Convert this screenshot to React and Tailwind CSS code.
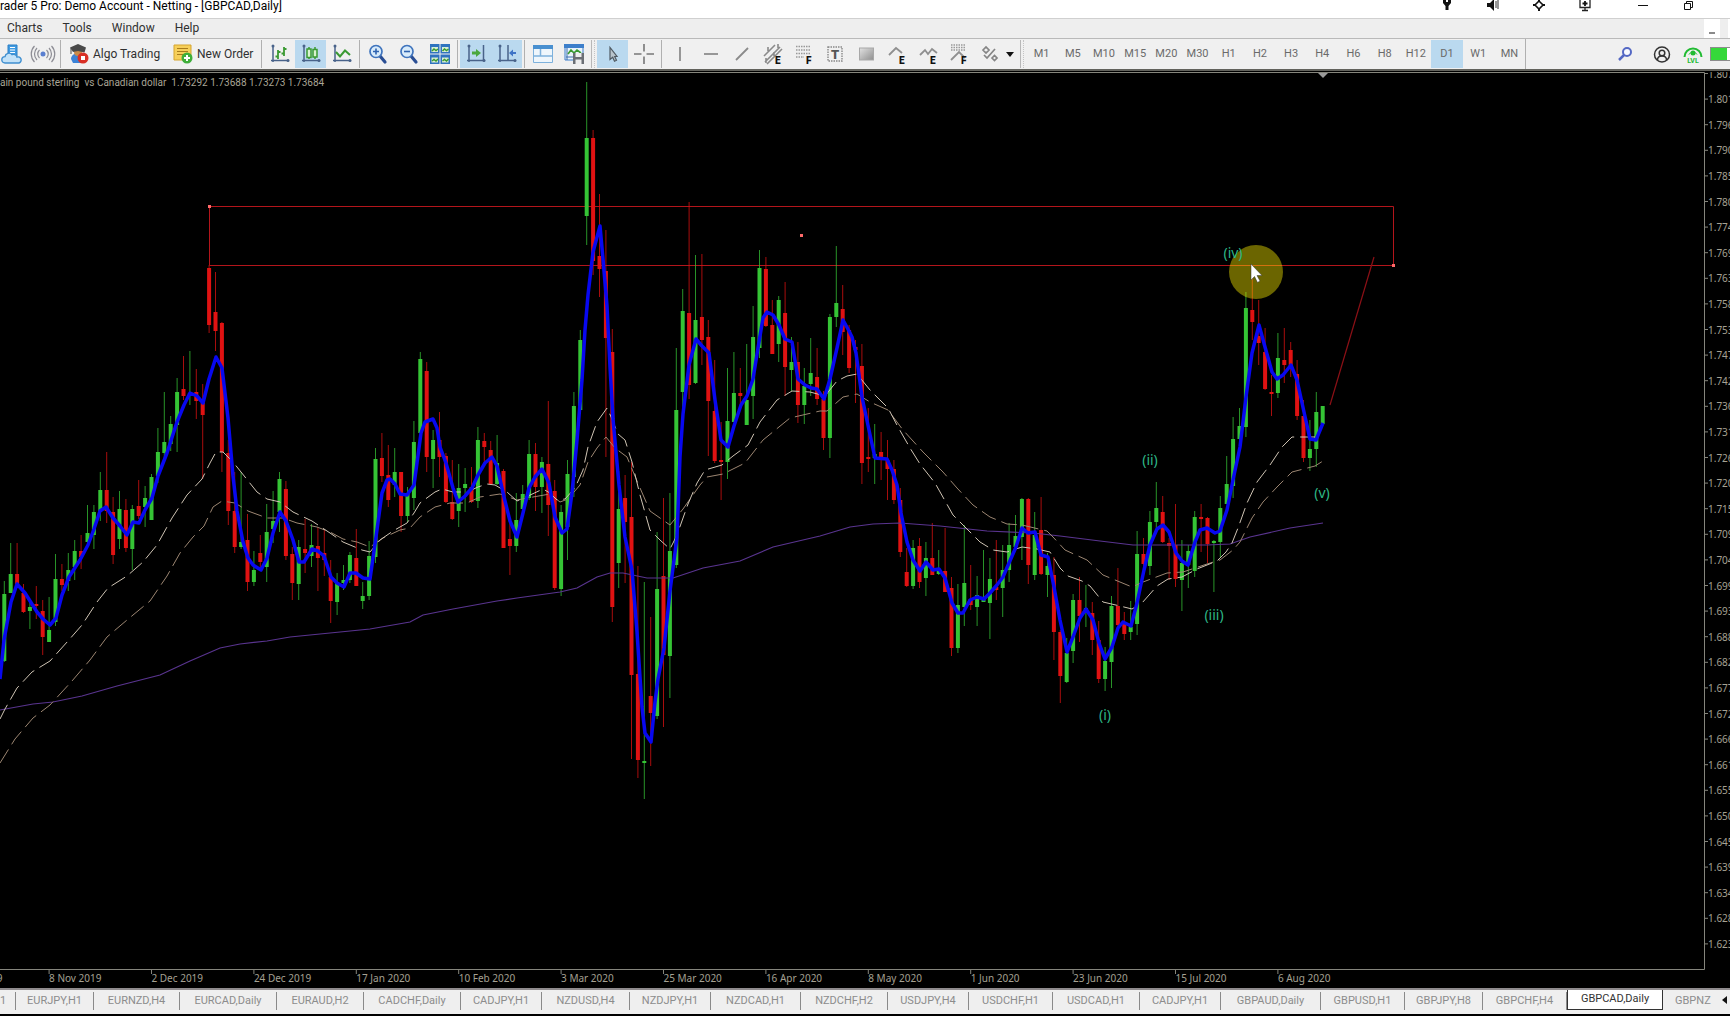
import React, { useState } from 'react';

// --- DATA ---
// Chart space: x grows 6.4 units per daily bar, y is measured from the top of the window.
// Each bar is [open, high, low, close].
const BAR_STEP = 6.4;
const FIRST_BAR = 4.3;

const bars = [
  [661, 581, 662, 594], [593, 543, 593, 574], [574, 543, 586, 584], [593, 584, 613, 612], [611, 600, 629, 607],
  [604, 586, 619, 606], [611, 600, 655, 637], [642, 597, 642, 630], [622, 554, 626, 579], [579, 564, 591, 585],
  [581, 553, 591, 570], [567, 540, 580, 551], [551, 535, 569, 557], [542, 505, 546, 533], [535, 505, 549, 512],
  [511, 472, 521, 490], [490, 452, 523, 511], [512, 497, 564, 555], [539, 491, 549, 509], [510, 499, 552, 548],
  [549, 505, 570, 509], [506, 480, 519, 516], [507, 486, 527, 498], [520, 474, 520, 477], [476, 428, 483, 452],
  [453, 392, 458, 442], [444, 416, 451, 424], [425, 378, 452, 392], [389, 356, 400, 396], [395, 351, 405, 393],
  [392, 369, 419, 401], [403, 384, 479, 415], [268, 265, 333, 325], [312, 272, 351, 331], [323, 322, 472, 452],
  [453, 440, 525, 511], [511, 472, 553, 547], [547, 472, 549, 542], [540, 514, 591, 582], [582, 551, 586, 570],
  [553, 535, 569, 562], [567, 504, 582, 532], [529, 491, 543, 521], [512, 472, 532, 479], [489, 481, 560, 556],
  [554, 547, 600, 583], [584, 540, 600, 547], [549, 519, 573, 553], [556, 524, 567, 545], [546, 527, 591, 558],
  [553, 530, 576, 560], [577, 560, 623, 601], [602, 573, 615, 583], [583, 565, 590, 580], [580, 552, 583, 555],
  [558, 529, 586, 586], [601, 582, 609, 596], [596, 541, 600, 556], [557, 448, 563, 459], [458, 433, 482, 476],
  [475, 445, 507, 500], [485, 448, 497, 472], [472, 472, 532, 516], [516, 487, 522, 493], [498, 421, 510, 442],
  [433, 352, 445, 359], [371, 362, 472, 457], [459, 430, 488, 440], [440, 412, 477, 457], [456, 453, 503, 502],
  [502, 460, 520, 519], [511, 464, 527, 488], [488, 468, 512, 484], [487, 467, 503, 502], [501, 427, 508, 440],
  [441, 433, 466, 447], [450, 441, 485, 484], [484, 435, 485, 463], [471, 469, 548, 548], [539, 520, 575, 546],
  [546, 493, 552, 520], [509, 485, 515, 494], [498, 440, 500, 454], [454, 443, 511, 487], [487, 457, 513, 462],
  [464, 401, 536, 505], [491, 480, 590, 588], [589, 505, 596, 512], [527, 460, 560, 474], [477, 392, 497, 406],
  [410, 330, 412, 340], [216, 82, 245, 138], [138, 130, 275, 261], [256, 194, 297, 269], [271, 230, 457, 338],
  [352, 329, 622, 607], [563, 471, 588, 509], [498, 475, 583, 522], [517, 462, 759, 675], [674, 566, 778, 760],
  [763, 582, 799, 761], [696, 617, 766, 713], [716, 532, 719, 589], [576, 498, 727, 655], [656, 493, 698, 551],
  [565, 348, 568, 410], [392, 289, 414, 311], [313, 202, 399, 385], [383, 255, 384, 320], [317, 254, 365, 340],
  [337, 320, 456, 401], [411, 360, 463, 461], [460, 422, 500, 462], [462, 368, 479, 421], [422, 352, 422, 393],
  [393, 368, 410, 396], [425, 344, 425, 400], [396, 306, 419, 337], [348, 250, 358, 268], [269, 257, 327, 326],
  [325, 300, 354, 354], [344, 296, 362, 300], [313, 282, 396, 367], [370, 337, 391, 362], [362, 342, 423, 405],
  [405, 368, 424, 386], [384, 338, 396, 373], [377, 348, 405, 399], [399, 391, 450, 438], [438, 314, 458, 317],
  [317, 246, 327, 303], [309, 285, 355, 332], [330, 325, 373, 368], [347, 340, 403, 350], [366, 344, 484, 463],
  [457, 408, 472, 459], [458, 424, 484, 454], [452, 432, 480, 457], [460, 440, 500, 469], [469, 460, 504, 500],
  [500, 488, 557, 552], [572, 548, 587, 586], [586, 540, 589, 548], [546, 538, 588, 582], [578, 542, 596, 558],
  [558, 523, 575, 575], [574, 550, 575, 569], [571, 528, 592, 592], [588, 577, 656, 648], [648, 584, 653, 605],
  [607, 525, 626, 583], [599, 565, 610, 605], [607, 576, 626, 595], [602, 550, 602, 599], [603, 558, 639, 579],
  [587, 540, 600, 590], [588, 545, 617, 570], [570, 523, 582, 545], [547, 515, 551, 536], [537, 498, 560, 499],
  [499, 498, 584, 565], [575, 512, 580, 535], [530, 497, 575, 574], [575, 553, 597, 566], [575, 557, 660, 632],
  [632, 630, 703, 676], [682, 638, 683, 653], [651, 594, 663, 600], [600, 577, 642, 616], [610, 585, 627, 608],
  [613, 602, 655, 640], [640, 621, 683, 679], [679, 647, 691, 661], [662, 596, 688, 606], [606, 568, 627, 625],
  [623, 612, 640, 634], [632, 601, 640, 627], [624, 531, 635, 554], [554, 538, 575, 564], [566, 511, 575, 522],
  [522, 482, 528, 508], [512, 496, 543, 542], [543, 538, 580, 546], [545, 504, 587, 579], [580, 540, 611, 563],
  [565, 545, 588, 551], [571, 511, 577, 517], [517, 504, 552, 519], [518, 517, 563, 544], [543, 540, 592, 541],
  [542, 496, 557, 508], [504, 456, 504, 484], [486, 417, 498, 439], [439, 408, 440, 426], [427, 292, 437, 308],
  [310, 268, 340, 322], [336, 300, 365, 343], [352, 328, 390, 389], [392, 375, 416, 394], [393, 333, 398, 358],
  [360, 328, 383, 365], [350, 342, 377, 367], [374, 360, 420, 416], [416, 400, 462, 458], [458, 420, 471, 449],
  [449, 392, 467, 412], [424, 406, 424, 406],
];

const fastAverage =
  '0,679 4,640 11,602 17,584 25,593 37,612 43,619 50,625 56,618 62,595 69,577 80,560 88,545 94,529 100,511 106,507 113,518 120,526 127,535 133,522 139,523 145,510 152,498 158,476 167,453 177,422 184,405 190,393 197,396 203,403 209,379 216,357 222,368 228,418 233,476 237,511 243,542 248,558 253,565 261,570 267,558 273,533 280,512 286,521 293,540 299,562 304,562 312,549 318,551 324,556 331,577 337,583 344,587 350,573 356,573 363,578 370,579 376,537 382,493 387,480 390,479 395,484 400,494 407,495 414,485 417,463 421,433 425,422 433,419 437,428 440,447 446,463 453,488 458,502 465,496 472,488 478,475 485,463 492,457 497,466 504,497 510,521 517,537 523,513 529,488 535,477 542,469 549,483 555,517 562,533 567,529 572,493 577,440 582,380 585,330 588,295 593,252 600,226 603,259 607,306 610,367 613,419 619,485 625,537 632,570 637,632 642,707 645,733 651,742 655,702 658,679 664,648 670,591 677,537 680,457 683,414 689,365 696,339 702,346 709,353 715,400 721,440 728,447 734,426 741,405 747,396 753,379 758,348 763,318 767,312 773,315 779,325 785,339 792,342 798,379 805,385 811,388 817,389 824,399 830,379 837,348 843,320 849,331 852,337 856,353 862,397 869,430 875,458 887,459 892,470 897,485 901,513 907,542 913,560 920,571 926,562 933,570 939,569 945,578 952,603 958,613 963,613 970,600 977,597 984,599 990,593 997,585 1003,577 1009,563 1016,547 1022,528 1028,533 1035,532 1041,555 1048,557 1054,587 1060,620 1067,652 1073,637 1080,618 1086,609 1093,620 1099,643 1105,659 1112,647 1118,628 1123,622 1131,626 1137,603 1144,570 1150,545 1157,529 1163,525 1169,532 1176,553 1182,561 1188,565 1195,542 1200,530 1207,528 1215,533 1220,531 1227,510 1233,480 1240,447 1246,397 1252,353 1259,325 1265,347 1272,372 1277,379 1283,375 1291,365 1297,380 1304,412 1310,439 1316,440 1323,423';

const upperBand =
  '0,719 5,709 17,688 32,672 50,661 68,641 82,625 97,602 108,588 127,576 143,562 157,545 172,518 187,495 202,479 210,463 216,452 223,452 233,462 245,477 257,492 267,499 280,502 293,512 312,521 330,533 343,542 362,550 370,552 380,540 393,531 407,523 414,513 420,503 435,492 442,489 453,492 467,492 478,487 487,484 495,485 507,492 517,501 528,496 543,489 550,493 557,500 565,499 575,488 583,470 588,447 597,422 607,408 612,419 618,434 625,440 632,462 640,495 650,530 660,540 670,549 677,535 688,504 697,483 705,470 722,465 733,456 748,445 760,422 777,400 792,391 810,392 825,396 837,381 847,376 857,374 870,390 888,408 898,427 910,448 920,464 935,483 953,515 965,527 980,542 993,550 1007,552 1022,547 1037,549 1050,552 1060,568 1068,576 1082,581 1090,586 1103,602 1120,606 1132,609 1142,603 1157,586 1168,579 1182,577 1197,569 1217,561 1226,552 1232,543 1238,528 1247,503 1257,482 1270,465 1282,447 1292,437 1303,437 1315,437';

const lowerBand =
  '0,763 15,739 33,718 50,705 72,681 90,660 107,637 127,620 150,601 167,576 180,553 193,537 204,526 213,507 222,501 235,503 248,511 267,518 283,518 297,523 317,527 330,532 343,539 357,542 370,547 383,538 400,530 410,528 420,517 435,507 450,503 467,503 480,497 500,494 517,500 533,497 550,494 560,502 568,499 580,485 588,462 597,448 606,437 615,448 627,457 637,481 650,511 670,525 683,509 700,485 707,477 723,474 745,463 763,440 790,418 820,411 827,411 843,397 857,394 870,402 888,410 903,430 923,452 943,472 957,488 973,505 990,517 1007,524 1022,525 1047,531 1053,537 1065,550 1087,560 1103,575 1120,582 1132,587 1143,582 1167,573 1183,572 1207,564 1220,560 1233,550 1240,542 1252,518 1263,502 1277,487 1292,472 1315,466 1323,461';

const slowAverage =
  '0,710 33,704 53,702 82,696 117,686 160,675 190,661 220,648 240,644 267,641 290,637 330,633 370,629 410,622 423,615 453,609 497,601 517,598 560,592 577,588 597,577 610,573 623,573 647,578 673,578 703,568 740,561 773,547 820,536 850,527 873,524 900,523 940,526 987,531 1033,533 1060,536 1100,541 1133,545 1207,545 1230,544 1250,537 1290,528 1323,523';

const waveLabels = [
  { text: '(i)', x: 1105, y: 720 },
  { text: '(ii)', x: 1150, y: 465 },
  { text: '(iii)', x: 1214, y: 620 },
  { text: '(iv)', x: 1233, y: 258 },
  { text: '(v)', x: 1322, y: 498 },
];

const prices = [
  '1.807', '1.801', '1.796', '1.790', '1.785', '1.780', '1.774', '1.769', '1.763', '1.758', '1.753', '1.747',
  '1.742', '1.736', '1.731', '1.726', '1.720', '1.715', '1.709', '1.704', '1.699', '1.693', '1.688', '1.682',
  '1.677', '1.672', '1.666', '1.661', '1.655', '1.650', '1.645', '1.639', '1.634', '1.628', '1.623',
];

const dates = [
  '17 Oct 2019', '8 Nov 2019', '2 Dec 2019', '24 Dec 2019', '17 Jan 2020', '10 Feb 2020', '3 Mar 2020',
  '25 Mar 2020', '16 Apr 2020', '8 May 2020', '1 Jun 2020', '23 Jun 2020', '15 Jul 2020', '6 Aug 2020',
];

const timeframes = ['M1', 'M5', 'M10', 'M15', 'M20', 'M30', 'H1', 'H2', 'H3', 'H4', 'H6', 'H8', 'H12', 'D1', 'W1', 'MN'];

const chartTabs = [
  { name: 'EURJPY,H1', width: 'w-[78px]' },
  { name: 'EURNZD,H4', width: 'w-[86px]' },
  { name: 'EURCAD,Daily', width: 'w-[97px]' },
  { name: 'EURAUD,H2', width: 'w-[87px]' },
  { name: 'CADCHF,Daily', width: 'w-[97px]' },
  { name: 'CADJPY,H1', width: 'w-[81px]' },
  { name: 'NZDUSD,H4', width: 'w-[88px]' },
  { name: 'NZDJPY,H1', width: 'w-[81px]' },
  { name: 'NZDCAD,H1', width: 'w-[90px]' },
  { name: 'NZDCHF,H2', width: 'w-[87px]' },
  { name: 'USDJPY,H4', width: 'w-[81px]' },
  { name: 'USDCHF,H1', width: 'w-[84px]' },
  { name: 'USDCAD,H1', width: 'w-[87px]' },
  { name: 'CADJPY,H1', width: 'w-[81px]' },
  { name: 'GBPAUD,Daily', width: 'w-[100px]' },
  { name: 'GBPUSD,H1', width: 'w-[84px]' },
  { name: 'GBPJPY,H8', width: 'w-[78px]' },
  { name: 'GBPCHF,H4', width: 'w-[84px]' },
  { name: 'GBPCAD,Daily', width: 'w-[96px]' },
];

export default function App() {
  const [timeframe, setTimeframe] = useState('D1');
  const [activeTab, setActiveTab] = useState(18);

  return (
    <div className="flex flex-col h-screen overflow-hidden bg-black font-['Roboto','Liberation_Sans',sans-serif] text-xs text-[#303030]">
      <TitleBar />
      <MenuBar />
      <Toolbar timeframe={timeframe} onTimeframe={setTimeframe} />

      {/* CHART */}
      <main className="relative flex-1 min-h-0 border-t-2 border-[#62625c] bg-black pt-px">
        <Chart />
        <p className="absolute left-0 top-1 text-[10px] leading-4 whitespace-pre text-[#a9a596]">
          ain pound sterling  vs Canadian dollar  1.73292 1.73688 1.73273 1.73684
        </p>
      </main>

      {/* CHART TABS */}
      <nav className="flex h-[26px] shrink-0 items-start overflow-hidden border-t-2 border-[#8f8b8d] bg-[#efefef] text-[11px] text-[#8c8c8c]">
        <span className="w-4 h-[18px] mt-0.5 leading-[18px] shrink-0 border-r border-[#8a8a8a]">1</span>
        {chartTabs.map((tab, index) => (
          <ChartTab key={index} tab={tab} active={activeTab === index} onClick={() => setActiveTab(index)} />
        ))}
        <button className="h-[18px] mt-0.5 pl-3 flex-1 text-left">GBPNZ</button>
        <button aria-label="Scroll tabs left" className="w-2 h-5 shrink-0 flex items-center">
          <svg width="5" height="8" viewBox="0 0 5 8"><path d="M5 0v8L0 4z" fill="#111" /></svg>
        </button>
      </nav>
      <div className="h-0.5 shrink-0 bg-black"></div>
    </div>
  );
}

// --- WINDOW CHROME ---
function TitleBar() {
  return (
    <header className="flex h-[18px] shrink-0 items-start justify-between bg-white text-black">
      <h1 className="leading-3">rader 5 Pro: Demo Account - Netting - [GBPCAD,Daily]</h1>
      <div className="flex pr-[18px]">
        <TitleButton label="Pin">
          <path d="M4 0h3v2h2V0h3v3L9.500 6v4h-3V6L4 3z" fill="#111" />
        </TitleButton>
        <TitleButton label="Sound">
          <path d="M2 3h3l4-4v12L5 7H2z" fill="#111" />
          <path d="M11 1v7M13 0v9" stroke="#555" strokeWidth="1.200" />
        </TitleButton>
        <TitleButton label="Move">
          <path d="M8 1l4 4-4 4-4-4z" fill="none" stroke="#111" strokeWidth="1.600" />
          <path d="M8-1v3M8 8v3M2 5h3M11 5h3" stroke="#111" strokeWidth="2" />
        </TitleButton>
        <TitleButton label="Present">
          <path d="M3 0v7.500h10V0M8 7v4M5 10.500h6" fill="none" stroke="#222" strokeWidth="1.300" />
          <path d="M8 1v5M5.500 3.500h5" stroke="#111" strokeWidth="1.800" />
        </TitleButton>
        <span className="w-3"></span>
        <TitleButton label="Minimize">
          <path d="M3 5.500h10" stroke="#111" />
        </TitleButton>
        <TitleButton label="Restore">
          <path d="M3.500 3.500h6v6h-6zM5.500 3V1.500h6v6H10" fill="none" stroke="#111" />
        </TitleButton>
      </div>
    </header>
  );
}

function TitleButton({ label, children }) {
  return (
    <button aria-label={label} className="w-[46px] h-3 flex justify-center">
      <svg width="16" height="12" viewBox="0 0 16 12">{children}</svg>
    </button>
  );
}

function MenuBar() {
  return (
    <nav className="flex h-5 shrink-0 items-start gap-5 border-t border-[#d0d0d0] bg-[#eeeeee] pl-[7px]">
      {['Charts', 'Tools', 'Window', 'Help'].map((item) => (
        <button key={item} className="leading-[18px]">{item}</button>
      ))}
      <div className="ml-auto flex h-full gap-2">
        <button aria-label="Minimize chart" className="flex w-4 items-center justify-center bg-white pt-2">
          <span className="w-1.5 h-0.5 bg-[#8a8a8a]"></span>
        </button>
        <span className="w-0.5 bg-white"></span>
      </div>
    </nav>
  );
}

function Toolbar({ timeframe, onTimeframe }) {
  return (
    <div className="flex h-[31px] shrink-0 items-center overflow-hidden border-t border-[#b9b9b9] bg-[#f0f0f0]">
      <div className="-ml-1 flex shrink-0 items-center">
        <Tool label="Market">
          <path d="M6 1h9v11H6z" fill="#3f9be2" stroke="#2c7fc4" />
          <path d="M8 3.500h5M8 6h5M8 8.500h5" stroke="#fff" strokeWidth="1.200" />
          <path d="M3 19a3.200 3.200 0 0 1 0-6.400 4 4 0 0 1 7-2 3.500 3.500 0 0 1 5 2.400 3 3 0 0 1 2 6z" fill="#c3e2f8" stroke="#3f8fd0" strokeWidth="1.400" />
        </Tool>
        <Tool label="Signals">
          <circle cx="10" cy="10" r="2.500" fill="#5a7fd0" />
          <path d="M6.500 6a5.500 5.500 0 0 0 0 8M13.500 6a5.500 5.500 0 0 1 0 8M4 4a8.500 8.500 0 0 0 0 12M16 4a8.500 8.500 0 0 1 0 12M1.500 2a11.500 11.500 0 0 0 0 16M18.500 2a11.500 11.500 0 0 1 0 16" fill="none" stroke="#8c8c94" strokeWidth="1.200" />
        </Tool>
        <Separator />
        <button className="flex w-[104px] h-7 items-center gap-1 pl-1.5">
          <Icon>
            <path d="M2 15c0-4 4-6 8-6s7 3 7 7l-5 3H4z" fill="#3b82d6" />
            <circle cx="9" cy="8" r="4" fill="#c98b4b" />
            <path d="M1 3.500L9 0l8 3.500-1.500 5L9 7 4 8z" fill="#4a4a4a" />
            <path d="M2 4v6" stroke="#4a4a4a" />
            <circle cx="14" cy="14" r="5.500" fill="#d93025" />
            <rect x="12" y="12" width="4" height="4" fill="#fff" />
          </Icon>
          Algo Trading
        </button>
        <button className="flex w-[92px] h-7 items-center gap-1 pl-1.5">
          <Icon>
            <path d="M1 1h17v11l-4 4H1z" fill="#f6cf5a" stroke="#d5a52e" />
            <path d="M4 4.500h11M4 7.500h11M4 10.500h7" stroke="#a97c1c" />
            <circle cx="14" cy="14" r="5.500" fill="#3fae3a" />
            <path d="M14 11v6M11 14h6" stroke="#fff" strokeWidth="2" />
          </Icon>
          New Order
        </button>
        <Separator />
        <Tool label="Bar chart">
          <Axes />
          <path d="M8 6v9M5.500 12.500H8M8 8h2.500M14 3v9M11.500 9.500H14M14 5h2.500" fill="none" stroke="#3a9a32" strokeWidth="1.800" />
        </Tool>
        <Tool label="Candlesticks" active>
          <Axes />
          <path d="M8 3v2M8 13v2M14 3v2M14 13v2" stroke="#3a9a32" strokeWidth="1.500" />
          <path d="M6 5h4v8.500H6zM12 5.500h4v7.500h-4z" fill="#d9f3d0" stroke="#3a9a32" strokeWidth="1.500" />
        </Tool>
        <Tool label="Line chart">
          <Axes />
          <path d="M4 8l4 4.500 5-6 5 4.500" fill="none" stroke="#3a9a32" strokeWidth="2" />
        </Tool>
        <Separator />
        <Tool label="Zoom in">
          <Magnifier />
          <path d="M8 4.500v6M5 7.500h6" stroke="#2f63b0" strokeWidth="1.600" />
        </Tool>
        <Tool label="Zoom out">
          <Magnifier />
          <path d="M5 7.500h6" stroke="#2f63b0" strokeWidth="1.600" />
        </Tool>
        <Tool label="Tile windows">
          <path d="M0 0h9.500v9.500H0zM10.500 0H20v9.500h-9.500zM0 10.500h9.500V20H0zM10.500 10.500H20V20h-9.500z" fill="#2f73bf" />
          <path d="M1.500 3h6.500v5H1.500zM12 3h6.500v5H12zM1.500 13.500h6.500v5H1.500zM12 13.500h6.500v5H12z" fill="#d8efd4" />
          <path d="M2 7l2-2 2 1.500L8 5M12.500 7l2-2 2 1.500 2-1.500M2 17l2-1.500L6 17l2-2M12.500 17l2-1.500 2 1.500 2-2" fill="none" stroke="#3a9a32" strokeWidth="1.500" />
        </Tool>
        <Separator />
        <Tool label="Auto scroll" active>
          <Axes />
          <path d="M17.500 1v15" stroke="#49638a" strokeWidth="1.500" />
          <path d="M6 7.500h4V5l5 4-5 4v-2.500H6z" fill="#4aa83e" />
        </Tool>
        <Tool label="Chart shift" active>
          <Axes />
          <path d="M11 1v15" stroke="#49638a" strokeWidth="1.500" />
          <path d="M19 8h-3V5.500L12 9l4 3.500V10h3z" fill="#3f74c6" />
        </Tool>
        <Separator />
        <Tool label="Data window">
          <path d="M.5 1.500h19v17H.5z" fill="#eef6fc" stroke="#7db1dc" />
          <path d="M0 1h20v4H0z" fill="#4a90d0" />
          <path d="M7.500 5v7M0 12h20" stroke="#7db1dc" strokeWidth="1.500" />
        </Tool>
        <Tool label="Templates">
          <path d="M1 1h18v15H1z" fill="#eaf3fb" stroke="#3d7fcb" />
          <path d="M0 0h20v4H0z" fill="#3d7fcb" />
          <path d="M3 4v12M2 13h8" stroke="#3d6cae" />
          <path d="M4 10l3-4 3 3 3-3 4 3" fill="none" stroke="#3a9a32" strokeWidth="1.600" />
          <path d="M9 9h11v11H9z" fill="#6b6f75" />
          <path d="M11.500 9h6v4h-6zM11.500 15.500h6V20h-6z" fill="#eee" />
        </Tool>
        <Grip />
        <Tool label="Cursor" active>
          <path d="M7 3.500v12l2.700-2.300 1.800 4 2-1-1.800-3.700H14z" fill="#b8c4cc" stroke="#4f5a63" strokeWidth="1.200" />
        </Tool>
        <Tool label="Crosshair">
          <path d="M10 0v7.500M10 12.500V20M0 10h7.500M12.500 10H20" stroke="#777" strokeWidth="1.600" />
        </Tool>
        <Separator />
        <Tool label="Vertical line"><path d="M10 3v14" stroke="#808080" strokeWidth="1.600" /></Tool>
        <Tool label="Horizontal line"><path d="M3 10h14" stroke="#808080" strokeWidth="1.600" /></Tool>
        <Tool label="Trendline"><path d="M4 16L16 4" stroke="#8a8a8a" strokeWidth="1.800" /></Tool>
        <Tool label="Equidistant channel">
          <path d="M1 12L12 1M2 18L17 3M4 20L19 5M5 3v4M11 8v4M15 0v4M3 14v5" stroke="#8a8a8a" strokeWidth="1.600" />
          <IconLetter>E</IconLetter>
        </Tool>
        <Tool label="Fibonacci retracement">
          <path d="M2 2.500h15M2 6h15M2 9.500h15M2 13h8" stroke="#999" strokeWidth="1.300" strokeDasharray="1.500 1" />
          <IconLetter>F</IconLetter>
        </Tool>
        <Tool label="Text">
          <rect x="3" y="3" width="14" height="14" fill="none" stroke="#888" strokeWidth="1.400" strokeDasharray="1.500 1" />
          <text x="10" y="15" textAnchor="middle" fontSize="13" fontWeight="900" fill="#555">T</text>
        </Tool>
        <Tool label="Rectangle">
          <defs>
            <linearGradient id="shade" x1="0" y1="0" x2="1" y2="1">
              <stop offset="0" stopColor="#e2e2e2" />
              <stop offset="1" stopColor="#8e8e8e" />
            </linearGradient>
          </defs>
          <rect x="3.500" y="4" width="14" height="12" fill="url(#shade)" stroke="#a8a8a8" />
        </Tool>
        <Tool label="Elliott impulse wave">
          <path d="M2 11l7-7 6 5" fill="none" stroke="#8f8f8f" strokeWidth="1.800" />
          <IconLetter>E</IconLetter>
        </Tool>
        <Tool label="Elliott correction wave">
          <path d="M2 11l5-5 3 4 4-5 5 4" fill="none" stroke="#8f8f8f" strokeWidth="1.800" />
          <IconLetter>E</IconLetter>
        </Tool>
        <Tool label="Fibonacci expansion">
          <path d="M2 1h14M2 3.500h14M2 6h14" stroke="#999" strokeWidth="1.300" strokeDasharray="1.500 1" />
          <path d="M2 16l8-8 6 6" fill="none" stroke="#8f8f8f" strokeWidth="1.800" />
          <IconLetter>F</IconLetter>
        </Tool>
        <button aria-label="More objects" className="flex w-11 h-7 shrink-0 items-center gap-1.5 pl-1.5">
          <Icon>
            <path d="M3 6l3-3 3 3-3 3zM12 14l2.500-2.500L17 14l-2.500 2.500zM4 11l3 3 8-9" fill="none" stroke="#858585" strokeWidth="1.700" />
          </Icon>
          <svg width="8" height="5" viewBox="0 0 8 5"><path d="M0 0h8L4 5z" fill="#111" /></svg>
        </button>
        <Grip />
        <div className="flex w-[499px]">
          {timeframes.map((frame) => (
            <button
              key={frame}
              onClick={() => onTimeframe(frame)}
              className={`flex-1 h-7 text-[11px] text-[#6a6a6a] ${timeframe === frame ? 'bg-[#bad9ef]' : ''}`}
            >
              {frame}
            </button>
          ))}
        </div>
        <span className="w-px h-8 bg-[#b0b0b0]"></span>
      </div>

      <div className="ml-auto flex h-full shrink-0 items-center">
        <Tool label="Search">
          <circle cx="12" cy="8" r="4" fill="#f7f9ff" stroke="#5468c4" strokeWidth="2" />
          <path d="M9 11l-5 5" stroke="#5468c4" strokeWidth="2.500" />
        </Tool>
        <span className="w-1.5"></span>
        <Tool label="Account">
          <circle cx="10" cy="10.500" r="7.500" fill="none" stroke="#333" strokeWidth="1.500" />
          <circle cx="10" cy="9" r="2.800" fill="none" stroke="#333" strokeWidth="1.500" />
          <path d="M5.500 16c0-2.500 1.500-4 4.500-4s4.500 1.500 4.500 4" fill="none" stroke="#333" strokeWidth="1.500" />
        </Tool>
        <Tool label="Latency level">
          <path d="M1.500 13a8.500 8.500 0 1 1 17 0" fill="none" stroke="#22bb33" strokeWidth="2" />
          <path d="M6 10.500a4.500 4.500 0 0 1 8 0" fill="none" stroke="#22bb33" strokeWidth="1" />
          <circle cx="10" cy="9" r="2.500" fill="#22bb33" />
          <text x="10" y="19" textAnchor="middle" fontSize="7" fontWeight="700" fill="#22bb33">LVL</text>
        </Tool>
        <div className="ml-0.5 w-5 h-3.5 border border-r-0 border-[#8c8c8c] bg-white">
          <div className="w-4 h-full bg-[#35d83a]"></div>
        </div>
      </div>
    </div>
  );
}

function Icon({ children }) {
  return (
    <svg width="20" height="20" viewBox="0 0 20 20" className="shrink-0 overflow-visible">
      {children}
    </svg>
  );
}

function Tool({ label, active, children }) {
  return (
    <button
      aria-label={label}
      className={`flex w-[31px] h-7 shrink-0 items-center justify-center ${active ? 'bg-[#bad9ef]' : ''}`}
    >
      <Icon>{children}</Icon>
    </button>
  );
}

function Separator() {
  return <span className="mx-0.5 w-px h-7 shrink-0 bg-[#b0b0b0]"></span>;
}

function Grip() {
  return <span className="mx-0.5 w-1 h-7 shrink-0 border-l border-[#b8b8b8] border-r border-r-[#c4c4c4] [border-right-style:dotted]"></span>;
}

function Axes() {
  return (
    <>
      <path d="M3 1v17M1 16.500h18" stroke="#49638a" strokeWidth="1.500" />
      <circle cx="3" cy="2" r="1.500" fill="#49638a" />
      <circle cx="18" cy="16.500" r="1.500" fill="#49638a" />
    </>
  );
}

function Magnifier() {
  return (
    <>
      <path d="M12 12l5 6" stroke="#2b4f94" strokeWidth="3.200" strokeLinecap="round" />
      <circle cx="8" cy="7.500" r="6" fill="#d8ebfa" stroke="#3f74bd" strokeWidth="1.700" />
    </>
  );
}

function IconLetter({ children }) {
  return <text x="12" y="20" fontSize="10" fontWeight="900" fill="#111">{children}</text>;
}

function ChartTab({ tab, active, onClick }) {
  return (
    <button
      onClick={onClick}
      className={`shrink-0 flex items-center justify-center ${tab.width} ${
        active ? 'h-5 border border-t-0 border-[#333] bg-white text-[#333]' : 'h-[18px] mt-0.5 border-r border-[#8a8a8a]'
      }`}
    >
      {tab.name}
    </button>
  );
}

// --- CHART ---
function Chart() {
  return (
    <svg
      viewBox="0 72 1730 916"
      preserveAspectRatio="xMinYMin meet"
      className="block w-full h-full font-['Noto_Sans','Open_Sans',sans-serif]"
    >
      {/* Frame */}
      <path d="M0 72.500H1704.500V969.500H0" fill="none" stroke="#85857c" />
      <path d="M1318 73h10l-5 5z" fill="#9a9a9a" />

      {/* Resistance zone */}
      <path d="M209.500 206.500H1393.500V265.500H209.500z" fill="none" stroke="#b3151b" />

      {bars.map((bar, index) => (
        <Candle key={index} x={FIRST_BAR + index * BAR_STEP} bar={bar} />
      ))}

      {/* Moving averages */}
      <polyline points={slowAverage} fill="none" stroke="#59348f" strokeWidth="1.200" />
      <polyline points={lowerBand} fill="none" stroke="#9c8672" strokeWidth="1" strokeDasharray="16 6" />
      <polyline points={upperBand} fill="none" stroke="#cfc4b4" strokeWidth="1" strokeDasharray="16 6" />
      <polyline points={fastAverage} fill="none" stroke="#0808f0" strokeWidth="3.500" strokeLinejoin="round" />

      {/* Projection */}
      <path d="M1330 405L1374 257" stroke="#8c1016" strokeWidth="1.200" />

      {/* Anchor points */}
      <path d="M208 205h3v3h-3zM800 234h3v3h-3zM1392 264h3v3h-3z" fill="#ff6a6a" />

      {/* Pointer */}
      <circle cx="1256" cy="272" r="27" fill="#fff000" fillOpacity="0.42" />
      <path d="M1251 264v16l3.500-3.500 3 6 2.500-1.500-3-5.500h5z" fill="#fff" stroke="#333" strokeWidth="0.500" />

      {waveLabels.map((label) => (
        <text key={label.text} x={label.x} y={label.y} textAnchor="middle" fontSize="14" fill="#2eb786">
          {label.text}
        </text>
      ))}

      {/* Price scale */}
      {prices.map((price, index) => (
        <g key={price}>
          <path d={`M1704 ${73.5 + index * 25.6}h4`} stroke="#85857c" />
          <text x="1708" y={77.5 + index * 25.6} fontSize="10" fill="#a5a193">{price}</text>
        </g>
      ))}

      {/* Time scale */}
      {dates.map((date, index) => (
        <g key={date}>
          <path d={`M${index * 102.4 - 53.3} 969v5`} stroke="#85857c" />
          <text x={index * 102.4 - 53.3} y="982" fontSize="10" fill="#a5a193">{date}</text>
        </g>
      ))}
    </svg>
  );
}

function Candle({ x, bar }) {
  const [open, high, low, close] = bar;
  const up = close < open;
  return (
    <g fill={up ? '#35c435' : '#e01212'}>
      <rect x={x - 0.5} y={high} width="1" height={low - high} fillOpacity="0.75" />
      <rect x={x - 2} y={Math.min(open, close)} width="4" height={Math.max(1, Math.abs(close - open))} />
    </g>
  );
}
